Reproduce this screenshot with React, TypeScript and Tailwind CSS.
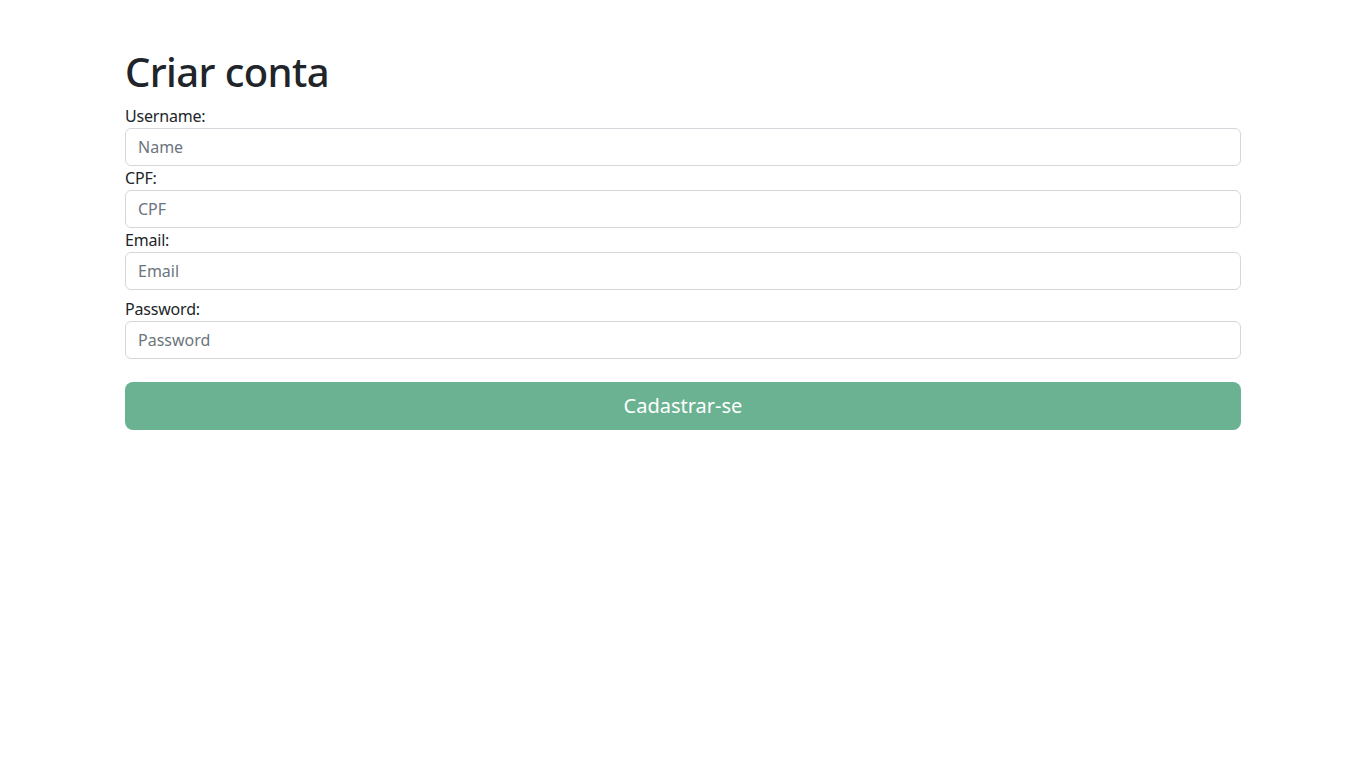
import React from 'react';

const fields = [
  { label: 'Username:', placeholder: 'Name', type: 'text', extra: '' },
  { label: 'CPF:', placeholder: 'CPF', type: 'text', extra: '' },
  { label: 'Email:', placeholder: 'Email', type: 'email', extra: '' },
  { label: 'Password:', placeholder: 'Password', type: 'password', extra: 'mt-[7px]' },
];

const App: React.FC = () => {
  return (
    <div className="min-h-screen bg-white text-[#212529] font-['Noto_Sans','Open_Sans',sans-serif]">
      <div className="mx-auto w-[1140px] px-3 pt-12">
        <h1 className="mb-2 text-[40px] font-medium leading-[48px] tracking-[-0.6px]">Criar conta</h1>
        <form className="flex flex-col">
          {fields.map((f) => (
            <div key={f.label} className={`flex flex-col ${f.extra}`}>
              <label className="text-base leading-6 tracking-[-0.2px]">{f.label}</label>
              <input
                type={f.type}
                placeholder={f.placeholder}
                className="h-[38px] w-full rounded-md border border-[#d4d8dd] px-3 text-base text-[#212529] outline-none placeholder:text-[#6c757d]"
              />
            </div>
          ))}
          <button
            type="button"
            className="mt-[23px] h-12 w-full rounded-lg bg-[#6ab291] text-xl text-white"
          >
            Cadastrar-se
          </button>
        </form>
      </div>
    </div>
  );
};

export default App;
